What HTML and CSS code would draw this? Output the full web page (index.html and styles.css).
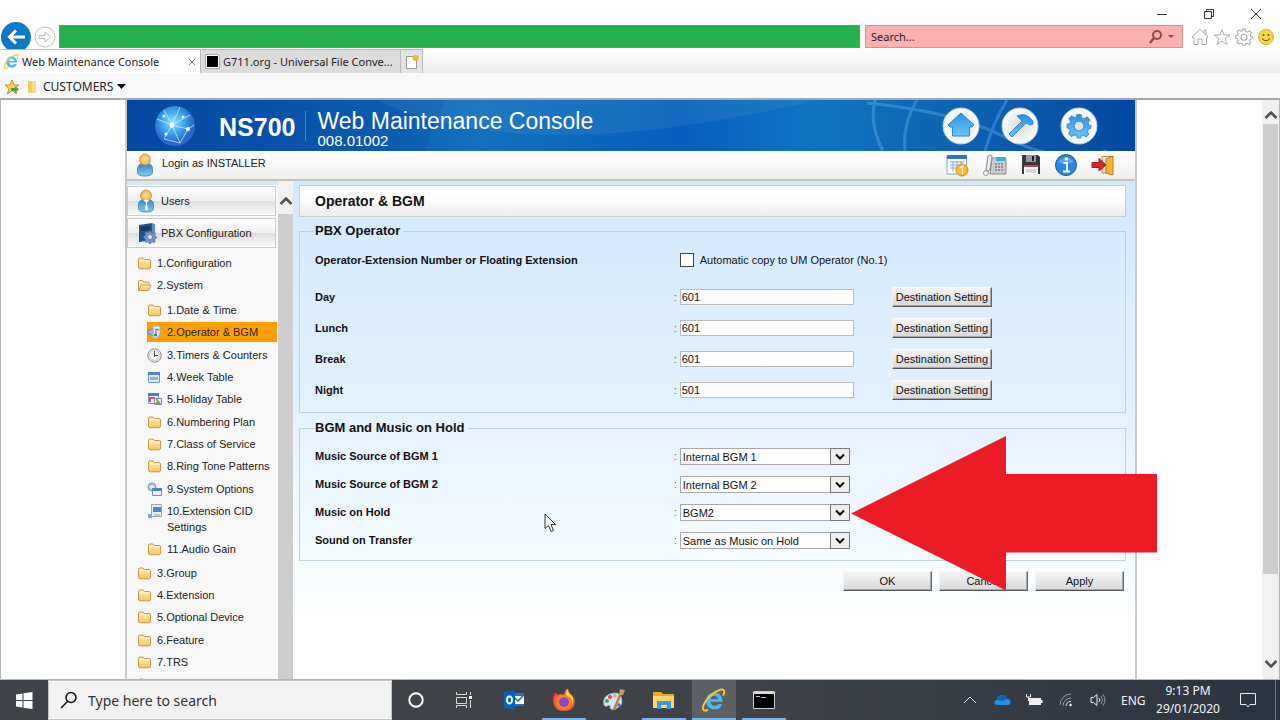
FILE: index.html
```html
<!DOCTYPE html>
<html lang="en">
<head>
<meta charset="utf-8">
<title>Web Maintenance Console</title>
<link rel="stylesheet" href="styles.css">
</head>
<body>
<svg class="defs" aria-hidden="true">
  <defs>
    <linearGradient id="gFolder" x1="0" y1="0" x2="0" y2="1"><stop offset="0" stop-color="#ffefb8"/><stop offset="1" stop-color="#f7c75c"/></linearGradient>
    <linearGradient id="gBlue" x1="0" y1="0" x2="0" y2="1"><stop offset="0" stop-color="#2a8fe6"/><stop offset="1" stop-color="#6cc4fb"/></linearGradient>
    <linearGradient id="gBody" x1="0" y1="0" x2="0" y2="1"><stop offset="0" stop-color="#2f7fc4"/><stop offset="1" stop-color="#7cd0f8"/></linearGradient>
    <radialGradient id="gHead"><stop offset="0" stop-color="#ffe7a6"/><stop offset="1" stop-color="#efb04a"/></radialGradient>
    <radialGradient id="gGlobe" cx=".45" cy=".4"><stop offset="0" stop-color="#8fe4ff"/><stop offset=".6" stop-color="#3aa0ea"/><stop offset="1" stop-color="#2668cf"/></radialGradient>
    <radialGradient id="gDisc"><stop offset="0" stop-color="#dcdcdc"/><stop offset=".75" stop-color="#f4f4f4"/><stop offset="1" stop-color="#ffffff"/></radialGradient>
    <radialGradient id="gFox" cx=".5" cy=".6"><stop offset="0" stop-color="#7a45e0"/><stop offset=".4" stop-color="#a23fc0"/><stop offset=".5" stop-color="#ff8a1c"/><stop offset="1" stop-color="#f8403c"/></radialGradient>
    <symbol id="folder" viewBox="0 0 14 13"><path d="M1 2.500Q1 1 2.500 1H5.500L7 2.500H11.500Q13 2.500 13 4V10Q13 11.800 11.500 11.800H2.800Q1 11.800 1 10Z" fill="url(#gFolder)" stroke="#c9974a"/><path d="M2 4H12" stroke="#fff6d8"/></symbol>
    <symbol id="folder-open" viewBox="0 0 15 13"><path d="M1.500 11V2.500Q1.500 1.500 2.500 1.500H5.500L7 3H11Q12 3 12 4V5.500" fill="#ffe9a8" stroke="#c9974a"/><path d="M1.500 11.500L4 6H14L11.500 11.500Z" fill="url(#gFolder)" stroke="#c9974a"/></symbol>
    <symbol id="user" viewBox="0 0 18 24"><path d="M1.500 16Q1.500 10 9 10T16.500 16V19Q16.500 23 9 23T1.500 19Z" fill="url(#gBody)" stroke="#5b8fb8"/><circle cx="9" cy="6.500" r="5.500" fill="url(#gHead)" stroke="#d79c43"/></symbol>
    <symbol id="ie" viewBox="0 0 24 24"><path d="M12 5C17 5 20 8.500 20 13.500H8.800C9 16 10.500 17.300 12.600 17.300C14.300 17.300 15.400 16.600 16 15.600H19.600C18.500 19 15.700 20.700 12.400 20.700C7.800 20.700 4.600 17.500 4.600 13C4.600 8.300 7.700 5 12 5ZM8.900 11.200H15.700C15.500 9.300 14.200 8.200 12.300 8.200S9.200 9.300 8.900 11.200Z" fill="#4db8ee"/><path d="M20.500 8C22.500 4 21.500 1.800 18 2.500C12 4 5 10.500 2.500 16.500C1 20.500 2 23 6.500 21" fill="none" stroke="#f6c834" stroke-width="1.800"/></symbol>
    <symbol id="gear" viewBox="0 0 24 24"><path d="M10 1.500H14L14.600 4.600L16.800 5.500L19.500 3.700L22 6.500L20.200 9L21 11L23 11.500V14L20.500 15L19.600 17.200L21 19.700L18.500 22L16 20.400L14 21.200L13.300 23H10.500L9.800 20.800L7.600 20L5 21.500L2.500 19L4 16.500L3.200 14.400L1 13.700V10.500L3.500 9.800L4.300 7.700L2.800 5.200L5.300 2.800L7.800 4.300L9.500 3.800Z"/></symbol>
  </defs>
</svg>

<header class="browser">
  <div class="titlebar">
    <button class="win-btn" aria-label="Minimize"><svg width="12" height="12"><path d="M1 6.500H11" stroke="#333"/></svg></button>
    <button class="win-btn" aria-label="Restore"><svg width="12" height="12" fill="none" stroke="#333"><path d="M1.500 3.500H8.500V10.500H1.500ZM3.500 3.500V1.500H10.500V8.500H8.500"/></svg></button>
    <button class="win-btn" aria-label="Close"><svg width="12" height="12"><path d="M1 1L11 11M11 1L1 11" stroke="#333"/></svg></button>
  </div>
  <div class="nav-row">
    <button class="back" aria-label="Back"><svg width="32" height="27" viewBox="0 0 32 27"><circle cx="16" cy="15" r="15" fill="#0a79c8"/><path d="M25 15H10M16 8.500L9.500 15L16 21.500" fill="none" stroke="#fff" stroke-width="3"/></svg></button>
    <button class="forward" aria-label="Forward"><svg width="22" height="22" fill="none" stroke="#bdbdbd"><circle cx="11" cy="11" r="10"/><path d="M5 9.500H11V6L16.500 11L11 16V12.500H5Z"/></svg></button>
    <input class="address" type="text" aria-label="Address">
    <div class="search-box">
      <input type="text" aria-label="Search" placeholder="Search...">
      <svg width="28" height="16" viewBox="0 0 28 16"><circle cx="8" cy="6" r="4" fill="none" stroke="#8d4a4a" stroke-width="2"/><path d="M5 9L1 14" stroke="#8d4a4a" stroke-width="2.500"/><path d="M19 6H25L22 9Z" fill="#8d4a4a"/></svg>
    </div>
    <div class="nav-tools">
      <button aria-label="Home"><svg width="18" height="18" fill="none" stroke="#aaa"><path d="M1 9L9 1.500L17 9L15.500 10V16.500H11V11H7V16.500H3V10ZM13 5V2H15V7"/></svg></button>
      <button aria-label="Favorites"><svg width="18" height="18" fill="none" stroke="#aaa"><path d="M9 1.500L11 7H17L12.200 10.500L14 16.500L9 13L4 16.500L5.800 10.500L1 7H7Z"/></svg></button>
      <button aria-label="Tools"><svg width="18" height="18" viewBox="0 0 24 24" fill="none" stroke="#aaa" stroke-width="1.400"><use href="#gear"/><circle cx="12" cy="12.300" r="4"/></svg></button>
      <button aria-label="Feedback"><svg width="18" height="18"><circle cx="9" cy="9" r="7.500" fill="#fbd63e" stroke="#dbb02c"/><circle cx="6.500" cy="7" r="1" fill="#5a4a10"/><circle cx="11.500" cy="7" r="1" fill="#5a4a10"/><path d="M5 10.500Q9 15 13 10.500" fill="none" stroke="#5a4a10"/></svg></button>
    </div>
  </div>
  <nav class="tabs">
    <a class="tab active" href="#"><svg width="17" height="17"><use href="#ie"/></svg><span>Web Maintenance Console</span><svg class="tab-close" width="8" height="8"><path d="M1 1L7 7M7 1L1 7" stroke="#888"/></svg></a>
    <a class="tab" href="#"><svg width="17" height="17"><path d="M1.500 1.500H13.500L15.500 3.500V15.500H1.500Z" fill="#fff" stroke="#aaa"/><path d="M3 3H14V14H3Z"/></svg><span>G711.org - Universal File Conve...</span></a>
    <button class="new-tab" aria-label="New tab"><svg width="14" height="16"><path d="M1.500 2.500H11.500V14.500H1.500Z" fill="#fff" stroke="#999"/><circle cx="10.500" cy="4" r="3" fill="#f0b93a"/></svg></button>
  </nav>
  <div class="favorites">
    <button aria-label="Add to favorites"><svg width="16" height="16"><path d="M8 1L10 6H15L11 9.500L12.500 15L8 11.500L3.500 15L5 9.500L1 6H6Z" fill="#fbd24a" stroke="#c79330"/><path d="M7 9H11V7L15 10.500L11 14V12H7Z" fill="#46a83c"/></svg></button>
    <button class="customers"><svg width="9" height="14"><path d="M0 1H8V13H0Z" fill="#fbdc83"/><path d="M0 1L4 2V13L0 12Z" fill="#f3c95c"/></svg><span>CUSTOMERS</span><svg width="9" height="5"><path d="M0 0H9L4.500 5Z"/></svg></button>
  </div>
</header>

<main class="viewport">
  <div class="page">
    <div class="console">
      <header class="banner">
        <svg class="banner-art" viewBox="0 0 1008 51" preserveAspectRatio="none" fill="none">
          <path d="M250 0Q400 70 690 0Z" fill="#fff" opacity=".06"/><path d="M318 0L298 51H0V0Z" fill="#003a92" opacity=".12"/>
          <g stroke="#5fb2ea" opacity=".4" stroke-width="3"><path d="M748 0Q742 25 756 51"/><path d="M790 0Q775 25 778 51"/><path d="M880 0Q865 25 858 51"/><path d="M740 3Q830 12 880 38T980 51"/></g>
        </svg>
        <svg class="globe" width="42" height="42" viewBox="0 0 42 42"><circle cx="21" cy="21" r="20" fill="url(#gGlobe)"/><g stroke="#d9f6ff" stroke-opacity=".7" fill="none"><path d="M3 14L18 20L36 10M18 20L10 34L26 38L18 20L34 24L40 20M10 5L18 20M26 2L18 20M34 24L26 38"/></g><g fill="#fff"><circle cx="18" cy="20" r="2.500"/><circle cx="34" cy="24" r="2"/><circle cx="12" cy="29" r="1.500"/><circle cx="10" cy="11" r="1.500"/><circle cx="29" cy="12" r="1.500"/></g></svg>
        <strong class="model">NS700</strong>
        <div class="product"><h1>Web Maintenance Console</h1><p>008.01002</p></div>
        <div class="round-buttons">
          <button aria-label="Home"><svg width="38" height="38" viewBox="0 0 38 38"><circle cx="19" cy="19" r="18" fill="url(#gDisc)" stroke="#bcd"/><path d="M19 6L32 18L30 20H27.500V29H10.500V20H8L6 18Z" fill="url(#gBlue)" stroke="#2f86d0"/></svg></button>
          <button aria-label="Maintenance"><svg width="38" height="38" viewBox="0 0 38 38"><circle cx="19" cy="19" r="18" fill="url(#gDisc)" stroke="#bcd"/><path d="M8 27L21 14L16 9Q23 6 28 10L32 14L32 17L29 18L25 16L11 30Z" fill="url(#gBlue)" stroke="#3a85c4"/></svg></button>
          <button aria-label="Settings"><svg width="38" height="38" viewBox="0 0 38 38"><circle cx="19" cy="19" r="18" fill="url(#gDisc)" stroke="#bcd"/><svg x="6" y="6" width="26" height="26" viewBox="0 0 24 24" fill="url(#gBlue)" stroke="#4a94cc"><use href="#gear"/><circle cx="12" cy="12" r="4.500" fill="#e4e4e4"/></svg></svg></button>
        </div>
      </header>

      <div class="status">
        <svg width="18" height="24"><use href="#user"/></svg>
        <span>Login as INSTALLER</span>
        <div class="status-tools">
          <button aria-label="Alarm schedule"><svg width="24" height="24"><path d="M2 2.500H21.500V21H2Z" fill="#fff" stroke="#7fa4d8"/><path d="M2 2H22V6H2Z" fill="#2f72d2"/><path d="M5 9H19M5 12H19M5 15H15M8 8V18M12 8V18M16 8V14" stroke="#88a9dd"/><circle cx="17" cy="17" r="6" fill="#fbb82c" stroke="#d68f19"/><path d="M15 15L17.500 13V21" fill="none" stroke="#fff" stroke-width="1.500"/></svg></button>
          <button aria-label="Phone"><svg width="26" height="24"><path d="M10 5H24V21H8Z" fill="#c9cccf" stroke="#888"/><path d="M14 4H23V8H14Z" fill="#39aed2"/><path d="M13 11H22M13 14H22M13 17H22" stroke="#555" stroke-dasharray="2 1"/><path d="M6 3Q10 1 10 4L8 16Q7 19 4 18Z" fill="#eee" stroke="#888"/><circle cx="4" cy="20" r="2.500" fill="none" stroke="#999"/></svg></button>
          <button aria-label="Save"><svg width="20" height="24"><path d="M1 2H17L19 4V21H1Z" fill="#37383a"/><path d="M5 2H15V9H5Z" fill="#999"/><path d="M11 3H13V8H11Z" fill="#222"/><path d="M3 12H17V21H3Z" fill="#fff"/><path d="M3 12H17V14H3Z" fill="#d23b37"/><path d="M5 17H15M5 19H15" stroke="#aaa"/></svg></button>
          <button aria-label="Information"><svg width="24" height="24"><circle cx="12" cy="12" r="10.500" fill="#2a86e2" stroke="#1b5aa8"/><path d="M4 9Q12 0 20 9Q12 12 4 9" fill="#7fbef5" opacity=".6"/><path d="M9.500 10H13V18M9 18.500H16" stroke="#fff" stroke-width="2" fill="none"/><circle cx="12.500" cy="6" r="1.700" fill="#fff"/></svg></button>
          <button aria-label="Logout"><svg width="24" height="24"><path d="M11 3.500H20V20H11Z" fill="#d6ecff" stroke="#c58b34"/><path d="M15 6L22 3V22L15 20Z" fill="#fbb62f" stroke="#b67a20"/><path d="M1 9.500H8V5.500L15 12L8 18V14.500H1Z" fill="#d92727" stroke="#a81818"/></svg></button>
        </div>
      </div>

      <div class="columns">
        <aside class="sidebar">
          <nav class="menu">
            <button class="section"><svg width="18" height="24"><use href="#user"/><path d="M7 11L9 14L8 21H11L10 14L12 11Z" fill="#fff"/></svg><span>Users</span></button>
            <button class="section"><svg width="20" height="22"><path d="M2 3L15 1V18L2 20Z" fill="#20548c"/><path d="M4 5L13 4V8L4 9Z" fill="#17365a"/><path d="M15 1L18 2V18L15 18Z" fill="#5a8fc2"/><svg x="6" y="8" width="14" height="14" viewBox="0 0 24 24" fill="#7795c2" stroke="#4b648c"><use href="#gear"/><circle cx="12" cy="12" r="4" fill="#e8eef6"/></svg></svg><span>PBX Configuration</span></button>
            <ul class="tree">
              <li><a href="#"><svg width="14" height="13"><use href="#folder"/></svg><span>1.Configuration</span></a></li>
              <li><a href="#"><svg width="15" height="13"><use href="#folder-open"/></svg><span>2.System</span></a>
                <ul class="subtree">
                  <li><a href="#"><svg width="14" height="13"><use href="#folder"/></svg><span>1.Date &amp; Time</span></a></li>
                  <li><a class="selected" href="#"><svg width="15" height="15"><path d="M1 5H3L8 2V12L3 9H1Z" fill="#a8b6c8" stroke="#6f8094"/><path d="M6 1H13V9L10 13H6Z" fill="#e3f0fc" stroke="#89b2da"/><path d="M9 10V4L12 5" fill="none" stroke="#2970c4"/><circle cx="8.500" cy="10" r="1.500" fill="#2970c4"/></svg><span>2.Operator &amp; BGM</span></a></li>
                  <li><a href="#"><svg width="15" height="15"><circle cx="7.500" cy="7.500" r="6.700" fill="#f1f1f1" stroke="#8b8b8b"/><circle cx="7.500" cy="7.500" r="5" fill="none" stroke="#ccc"/><path d="M7.500 3V9M7.500 7.500H11" stroke="#555"/></svg><span>3.Timers &amp; Counters</span></a></li>
                  <li><a href="#"><svg width="14" height="13"><path d="M1.500 1.500H12.500V11.500H1.500Z" fill="#dfeafa" stroke="#6b93cc"/><path d="M1 1H13V4H1Z" fill="#4e86cf"/><path d="M3 6H11V9H3Z" fill="#8eb0de"/></svg><span>4.Week Table</span></a></li>
                  <li><a href="#"><svg width="16" height="14"><path d="M1.500 1.500H11.500V11.500H1.500Z" fill="#e5effc" stroke="#7a9acb"/><path d="M1 1H12V4H1Z" fill="#4f7fc8"/><path d="M3 10V6H8" stroke="#e05252" stroke-width="2" fill="none"/><path d="M7.500 6.500H14.500V12.500H7.500Z" fill="#eaf5ff" stroke="#889"/><path d="M8 12L11 8L14 12Z" fill="#5fa95a"/><circle cx="10" cy="8" r="1" fill="#e05252"/></svg><span>5.Holiday Table</span></a></li>
                  <li><a href="#"><svg width="14" height="13"><use href="#folder"/></svg><span>6.Numbering Plan</span></a></li>
                  <li><a href="#"><svg width="14" height="13"><use href="#folder"/></svg><span>7.Class of Service</span></a></li>
                  <li><a href="#"><svg width="14" height="13"><use href="#folder"/></svg><span>8.Ring Tone Patterns</span></a></li>
                  <li><a href="#"><svg width="16" height="15"><circle cx="5" cy="5" r="4" fill="#bcc8d6" stroke="#8296ac"/><circle cx="5" cy="5" r="1.500" fill="#fff"/><path d="M5.500 6.500H14.500V13.500H5.500Z" fill="#eef5fd" stroke="#6690c8"/><path d="M5 6H15V9H5Z" fill="#4b82cc"/></svg><span>9.System Options</span></a></li>
                  <li class="tall"><a href="#"><svg width="16" height="16"><path d="M4.500 1.500H14.500V13.500H4.500Z" fill="#e6eef8" stroke="#98a9bd"/><path d="M6 4H14V9H6Z" fill="#4f86c9"/><path d="M1 11H5V15H1Z" fill="#79a6d8"/><path d="M7 12H13" stroke="#8aa"/></svg><span>10.Extension CID Settings</span></a></li>
                  <li><a href="#"><svg width="14" height="13"><use href="#folder"/></svg><span>11.Audio Gain</span></a></li>
                </ul>
              </li>
              <li><a href="#"><svg width="14" height="13"><use href="#folder"/></svg><span>3.Group</span></a></li>
              <li><a href="#"><svg width="14" height="13"><use href="#folder"/></svg><span>4.Extension</span></a></li>
              <li><a href="#"><svg width="14" height="13"><use href="#folder"/></svg><span>5.Optional Device</span></a></li>
              <li><a href="#"><svg width="14" height="13"><use href="#folder"/></svg><span>6.Feature</span></a></li>
              <li><a href="#"><svg width="14" height="13"><use href="#folder"/></svg><span>7.TRS</span></a></li>
              <li><a href="#" aria-label="More"><svg width="14" height="13"><use href="#folder"/></svg></a></li>
            </ul>
          </nav>
          <div class="scrollbar inner"><svg width="14" height="10"><path d="M1.500 8L7 2.500L12.500 8" fill="none" stroke="#505050" stroke-width="2.500"/></svg><div class="thumb"></div></div>
        </aside>

        <form class="content">
          <h2>Operator &amp; BGM</h2>
          <fieldset class="operators">
            <legend>PBX Operator</legend>
            <div class="row first"><span class="name">Operator-Extension Number or Floating Extension</span><label class="check"><input type="checkbox"><span>Automatic copy to UM Operator (No.1)</span></label></div>
            <div class="row"><label class="name" for="day">Day</label><span class="colon">:</span><input class="number" id="day" type="text" value="601"><button class="btn" type="button">Destination Setting</button></div>
            <div class="row"><label class="name" for="lunch">Lunch</label><span class="colon">:</span><input class="number" id="lunch" type="text" value="601"><button class="btn" type="button">Destination Setting</button></div>
            <div class="row"><label class="name" for="break">Break</label><span class="colon">:</span><input class="number" id="break" type="text" value="601"><button class="btn" type="button">Destination Setting</button></div>
            <div class="row"><label class="name" for="night">Night</label><span class="colon">:</span><input class="number" id="night" type="text" value="501"><button class="btn" type="button">Destination Setting</button></div>
          </fieldset>
          <fieldset class="music">
            <legend>BGM and Music on Hold</legend>
            <div class="row"><label class="name" for="bgm1">Music Source of BGM 1</label><span class="colon">:</span><span class="drop"><select id="bgm1"><option>Internal BGM 1</option></select><svg width="20" height="17"><path d="M.5 .5H19.500V16.500H.5Z" fill="#eee" stroke="#777"/><path d="M6 6.500L10 10.500L14 6.500" fill="none" stroke="#111" stroke-width="2"/></svg></span></div>
            <div class="row"><label class="name" for="bgm2">Music Source of BGM 2</label><span class="colon">:</span><span class="drop"><select id="bgm2"><option>Internal BGM 2</option></select><svg width="20" height="17"><path d="M.5 .5H19.500V16.500H.5Z" fill="#eee" stroke="#777"/><path d="M6 6.500L10 10.500L14 6.500" fill="none" stroke="#111" stroke-width="2"/></svg></span></div>
            <div class="row"><label class="name" for="hold">Music on Hold</label><span class="colon">:</span><span class="drop"><select id="hold"><option>BGM2</option></select><svg width="20" height="17"><path d="M.5 .5H19.500V16.500H.5Z" fill="#eee" stroke="#777"/><path d="M6 6.500L10 10.500L14 6.500" fill="none" stroke="#111" stroke-width="2"/></svg></span></div>
            <div class="row"><label class="name" for="transfer">Sound on Transfer</label><span class="colon">:</span><span class="drop"><select id="transfer"><option>Same as Music on Hold</option></select><svg width="20" height="17"><path d="M.5 .5H19.500V16.500H.5Z" fill="#eee" stroke="#777"/><path d="M6 6.500L10 10.500L14 6.500" fill="none" stroke="#111" stroke-width="2"/></svg></span></div>
          </fieldset>
          <div class="actions"><button class="btn" type="button">OK</button><button class="btn" type="button">Cancel</button><button class="btn" type="button">Apply</button></div>
          <svg class="pointer" width="13" height="20"><path d="M1 1V15.500L4.500 12.500L7 18.500L9.500 17.500L7 11.500H11.500Z" fill="#fff" stroke="#333"/></svg>
          <svg class="arrow" width="307" height="155"><path d="M0 77.500L155 0V38H306V116.500H155V154.500Z" fill="#ed1c24"/></svg>
        </form>
      </div>
    </div>
  </div>
  <div class="scrollbar outer"><svg width="14" height="10"><path d="M1.500 8L7 2.500L12.500 8" fill="none" stroke="#505050" stroke-width="2.500"/></svg><div class="thumb"></div><svg width="14" height="10"><path d="M1.500 2L7 7.500L12.500 2" fill="none" stroke="#505050" stroke-width="2.500"/></svg></div>
</main>

<footer class="taskbar">
  <button class="start" aria-label="Start"><svg width="17" height="17" fill="#fff"><path d="M0 2.500L6.500 1.500V8H0ZM7.500 1.300L16.500 0V8H7.500ZM0 9H6.500V15.500L0 14.500ZM7.500 9H16.500V17L7.500 15.700Z"/></svg></button>
  <label class="task-search"><svg width="18" height="18" fill="none" stroke="#111" stroke-width="1.500"><circle cx="11" cy="6.500" r="5"/><path d="M7.500 10.500L1 17"/></svg><input type="text" placeholder="Type here to search" aria-label="Type here to search"></label>
  <div class="apps">
    <button aria-label="Cortana"><svg width="18" height="18"><circle cx="9" cy="9" r="6.700" fill="none" stroke="#fff" stroke-width="2"/></svg></button>
    <button aria-label="Task view"><svg width="18" height="18" fill="none" stroke="#ddd"><path d="M1.500 1V3.500H11.500V1M1.500 6.500H11.500V12.500H1.500ZM1.500 17V14.500H11.500V17M15.500 1V4M15.500 9V17"/><path d="M14 5H17V8H14Z" fill="#fff" stroke="none"/></svg></button>
    <button aria-label="Outlook"><svg width="22" height="20"><path d="M10 3H21V16H10Z" fill="#1976d2"/><path d="M11 6H21V14H11Z" fill="#fff"/><path d="M12 8L15 11L20 6" fill="none" stroke="#0a64b8" stroke-width="1.500"/><path d="M1 2L12 0V20L1 18Z" fill="#0563b8"/><ellipse cx="6.500" cy="10" rx="2.500" ry="3.500" fill="none" stroke="#fff" stroke-width="1.800"/></svg></button>
    <button class="open" aria-label="Firefox"><svg width="24" height="24"><path d="M3 5Q5 5 6 7Q9 5 11 7Q13 6 13 2Q15 0 16 1Q16 4 19 6Q23 10 23 14Q22 23 12 23T1 13Q1 8 3 5Z" fill="url(#gFox)"/><path d="M16 1Q16 5 20 8Q23 12 20 17Q21 10 15 8Q12 5 16 1Z" fill="#ffd936"/></svg></button>
    <button aria-label="Paint"><svg width="24" height="24"><path d="M2 17Q0 9 8 6Q17 3 19 9Q22 17 15 20Q10 23 8 20Q9 16 5 18Q3 19 2 17Z" fill="#d4e5f2" stroke="#9cb7ca"/><circle cx="5" cy="13" r="2" fill="#3fa34d"/><circle cx="8" cy="9" r="2" fill="#d64545"/><circle cx="13" cy="8" r="1.700" fill="#e9a62e"/><circle cx="17" cy="17" r="1.700" fill="#3976cc"/><path d="M12 22L18 7" stroke="#b98047" stroke-width="2.500"/><path d="M17 7L18 1L23 2L21 7Z" fill="#c99d67"/></svg></button>
    <button class="open" aria-label="File Explorer"><svg width="24" height="20"><path d="M1 2H9L11 4H22V18H1Z" fill="#e9a927"/><path d="M1 6H22V18H1Z" fill="#ffd768"/><path d="M5 19V11H19V19H15V15H9V19Z" fill="#3a98dd"/></svg></button>
    <button class="open current" aria-label="Internet Explorer"><svg width="26" height="26"><use href="#ie"/></svg></button>
    <button class="open" aria-label="Command Prompt"><svg width="22" height="18"><path d="M.5 .5H21.500V17.500H.5Z" fill="#000" stroke="#ccc"/><path d="M1 2H21" stroke="#ddd" stroke-width="2"/><path d="M3 5.500H7M8 6.500H13" stroke="#bbb"/></svg></button>
  </div>
  <div class="tray">
    <button aria-label="Show hidden icons"><svg width="14" height="8"><path d="M1 7L7 1L13 7" fill="none" stroke="#eee"/></svg></button>
    <button aria-label="OneDrive"><svg width="17" height="12"><path d="M3 11Q0 11 0.500 8Q1 6 3 6Q4 1 8 1Q12 1 13 5Q17 5 16.500 9Q16 11 14 11Z" fill="#1e90ea"/><path d="M3 6Q4 1 8 1Q12 1 13 5L9 7Z" fill="#0a64b8"/></svg></button>
    <button aria-label="Battery"><svg width="18" height="12"><path d="M4 4H16V11H4Z" fill="#f1f1f1"/><path d="M16 6H17.500V9H16Z" fill="#fff"/><path d="M1.500 0V3H5.500V0M3.500 3V7" fill="none" stroke="#eee"/></svg></button>
    <button aria-label="Network"><svg width="14" height="14" fill="none" stroke="#999"><path d="M1 12A11 11 0 0 1 12 1M4 13A8 8 0 0 1 12 5"/><path d="M7 13A5 5 0 0 1 12 8.500" stroke="#ddd"/><circle cx="11.500" cy="12" r="1.300" fill="#fff" stroke="none"/></svg></button>
    <button aria-label="Volume"><svg width="16" height="14" fill="none" stroke="#eee"><path d="M1 4.500H3.500L7 1.500V12.500L3.500 9.500H1ZM9 5Q10.500 7 9 9"/><path d="M11 3Q14 7 11 11M13 1.500Q17 7 13 12.500" stroke="#999"/></svg></button>
    <span class="lang">ENG</span>
    <time class="clock"><span>9:13 PM</span><span>29/01/2020</span></time>
    <button class="notify" aria-label="Notifications"><svg width="18" height="18"><path d="M1.500 2.500H16.500V13.500H11L9 16L7 13.500H1.500Z" fill="none" stroke="#eee"/></svg></button>
  </div>
</footer>
</body>
</html>
```
FILE: styles.css
```css
* { box-sizing: border-box; }
body { margin: 0; height: 100vh; display: flex; flex-direction: column; overflow: hidden; background: #fff; color: #222; font: 12px "Noto Sans", sans-serif; }
button, input, select { font: inherit; color: inherit; margin: 0; padding: 0; border: 0; background: none; border-radius: 0; }
button { display: flex; align-items: center; justify-content: center; }
a { color: inherit; text-decoration: none; }
svg { display: block; flex: none; }
h1, h2, p, ul, fieldset { margin: 0; padding: 0; }
ul { list-style: none; }
.defs { position: absolute; width: 0; height: 0; }

/* browser frame */
.browser { flex: none; border-bottom: 2px solid #a3a9ae; }
.titlebar { height: 22px; display: flex; justify-content: flex-end; align-items: flex-end; gap: 35px; padding-right: 18px; }
.win-btn { height: 16px; }
.nav-row { height: 27px; display: flex; align-items: flex-end; padding-right: 5px; font-size: 11px; }
.back { height: 27px; }
.forward { width: 27px; height: 24px; padding-right: 2px; }
.address { flex: 1; min-width: 0; height: 23px; margin-bottom: 1px; background: #24b14c; border: 1px solid #5c9c6c; }
.search-box { width: 318px; height: 23px; margin: 0 8px 1px 5px; display: flex; align-items: center; background: #ffafaf; border: 1px solid #dc8f8f; padding: 0 5px; }
.search-box input { flex: 1; min-width: 0; }
.search-box input::placeholder { color: #222; opacity: 1; }
.nav-tools { display: flex; gap: 4px; height: 24px; align-items: center; }
.tabs { height: 24px; display: flex; background: linear-gradient(#fff, #ececec); font-size: 11px; }
.tab { width: 200px; display: flex; align-items: center; gap: 2px; padding-left: 3px; background: #dcdcdc; border: solid #bbb; border-width: 1px 1px 0 0; white-space: nowrap; }
.tab.active { width: 201px; background: #fff; }
.tab-close { margin: 0 4px 0 auto; }
.new-tab { width: 22px; background: #e4e4e4; border: solid #bbb; border-width: 1px 1px 0 0; }
.favorites { height: 25px; display: flex; align-items: center; padding: 2px 4px 0; gap: 8px; background: #f9f9f9; }
.customers { gap: 4px; }
.customers span { padding-left: 2px; }

/* page area */
.viewport { flex: 1; min-height: 0; display: flex; border: solid #b4b4b4; border-width: 0 1px 1px; font: 11px/16px "Liberation Sans", Arial, sans-serif; }
.page { flex: 1; min-width: 0; display: flex; justify-content: center; padding-right: 1px; }
.console { width: 100%; max-width: 1012px; display: flex; flex-direction: column; border: solid #c6cacd; border-width: 0 2px; }
.banner { position: relative; flex: none; height: 51px; display: flex; align-items: center; color: #fff; background: linear-gradient(90deg, #0549a4, #0d5fb4 25%, #1270bf 35%, #0660bb 55%, #0d75c4 68%, #0e66b4 80%, #0348a4); }
.banner-art { position: absolute; inset: 0; width: 100%; height: 100%; }
.banner > :not(.banner-art) { position: relative; }
.globe { margin-left: 27px; }
.model { margin-left: 23px; padding: 2px 10px 0 0; font-size: 25px; line-height: 28px; border-right: 1px solid #4387c8; }
.product { margin-left: 11px; }
.product h1 { font-size: 23px; line-height: 26px; font-weight: 400; padding-top: 4px; white-space: nowrap; }
.product p { font-size: 15px; line-height: 14px; }
.round-buttons { margin-left: auto; margin-right: 37px; display: flex; gap: 21px; }
.status { flex: none; height: 30px; display: flex; align-items: center; gap: 8px; padding: 0 20px 0 9px; background: linear-gradient(#fff, #f0f0ee); border-bottom: 2px solid #c4c3b6; }
.status > span { padding-bottom: 4px; }
.status-tools { margin-left: auto; display: flex; gap: 13px; }
.columns { flex: 1; min-height: 0; display: flex; }

/* sidebar */
.sidebar { flex: none; width: 166px; display: flex; overflow: hidden; background: #f8f8f8; }
.menu { flex: 1; min-width: 0; border-top: 4px solid #d6e9fa; }
.section { width: 149px; height: 30px; margin-top: 1px; padding-left: 9px; gap: 6px; justify-content: flex-start; border: 1px solid #cdcdcd; background: linear-gradient(#fff, #f0f0f0 48%, #dfdfdf 52%, #fafafa); }
.section + .section { margin-top: 2px; gap: 4px; }
.tree { padding: 4px 0 0 10px; }
.tree a { min-height: 22px; display: flex; align-items: center; gap: 5px; }
.tree svg { width: 15px; }
.tree > li:nth-child(3n) { padding-top: 1px; }
.subtree { padding: 3px 1px 0 10px; }
.subtree li:nth-child(3n + 2) { padding-bottom: 1px; }
.subtree .selected { min-height: 20px; margin: 1px 0; background: #ffa000; }
.subtree .tall a { align-items: flex-start; padding-top: 3px; padding-bottom: 3px; }
.subtree .tall span { max-width: 100px; }
.scrollbar { flex: none; display: flex; flex-direction: column; align-items: center; background: #f1f1f1; }
.scrollbar .thumb { width: 100%; background: #cdcdcd; }
.inner { width: 15px; padding-top: 15px; gap: 8px; }
.inner .thumb { flex: 1; }
.outer { width: 17px; padding: 10px 1px; justify-content: space-between; }
.outer .thumb { flex: 0 1 450px; margin: 4px 0 auto; }

/* form */
.content { position: relative; flex: 1; min-width: 0; padding: 4px 9px 0 6px; background: linear-gradient(#d3e9fe, #e2f1ff 45%, #f8fdff 78%, #fff 90%); color: #111; }
.content h2 { height: 32px; padding-left: 15px; font-size: 14px; line-height: 30px; border: 1px solid #c4cfd8; background: linear-gradient(#fff 35%, #ededeb); }
fieldset { min-width: 0; padding: 0 15px; border: 1px solid #c2d2dc; }
legend { font-size: 13px; font-weight: 700; line-height: 16px; padding: 0 3px 0 0; }
.operators { margin-top: 6px; padding-bottom: 7px; }
.music { margin-top: 7px; padding-top: 6px; padding-bottom: 6px; }
.row { display: flex; align-items: center; height: 31px; }
.row.first { height: 42px; }
.name { flex: none; width: 45%; font-weight: 700; }
.colon { flex: none; width: 7px; color: #5d7383; padding-left: 1px; }
.check { display: flex; align-items: center; gap: 6px; margin-left: 7px; }
.check input { appearance: none; width: 14px; height: 14px; background: #fff; border: 1px solid #444; }
.number { width: 174px; height: 16px; padding-left: 1px; background: #fff; border: 1px solid #bbb; }
.btn { height: 20px; padding: 0 3px; background: linear-gradient(#f4f4f4, #d8d8d8); border: 1px solid; border-color: #fafafa #666 #555 #f4f4f4; box-shadow: inset -1px -1px #a8a8a8; white-space: nowrap; }
.row .btn { margin-left: 38px; }
.music .row { height: 28px; }
.drop { position: relative; width: 170px; }
.drop select { display: block; appearance: none; width: 100%; height: 17px; padding-left: 2px; background: #fff; border: 1px solid #aaa; }
.drop svg { position: absolute; right: 0; top: 0; pointer-events: none; }
.actions { display: flex; justify-content: flex-end; gap: 7px; padding: 10px 2px 0 0; }
.actions .btn { width: 89px; }
.pointer { position: absolute; left: 251px; top: 332px; }
.arrow { position: absolute; left: 558px; top: 255px; }

/* taskbar */
.taskbar { flex: none; height: 40px; display: flex; color: #f4f4f4; background: linear-gradient(90deg, #3f4247, #3f4347 60%, #2b3340); }
.start { width: 48px; }
.task-search { width: 344px; display: flex; align-items: center; gap: 10px; padding: 0 11px; background: #f2f2f2; border: 1px solid #c4c4c4; font-size: 14px; }
.task-search input { flex: 1; min-width: 0; }
.task-search input::placeholder { color: #333; opacity: 1; }
.apps { display: flex; gap: 6px; }
.apps button { width: 44px; border-bottom: 2px solid transparent; padding-top: 2px; }
.apps button:first-child { width: 48px; margin-right: -4px; }
.apps .open { border-color: #76b2ec; }
.apps .current { background: #5c6064; }
.tray { margin-left: auto; display: flex; align-items: center; padding-right: 4px; }
.tray button { width: 32px; height: 40px; }
.lang { width: 42px; padding-left: 7px; }
.clock { width: 64px; display: flex; flex-direction: column; align-items: center; line-height: 18px; }
.tray .notify { width: 56px; border-right: 1px solid #777; }
```
